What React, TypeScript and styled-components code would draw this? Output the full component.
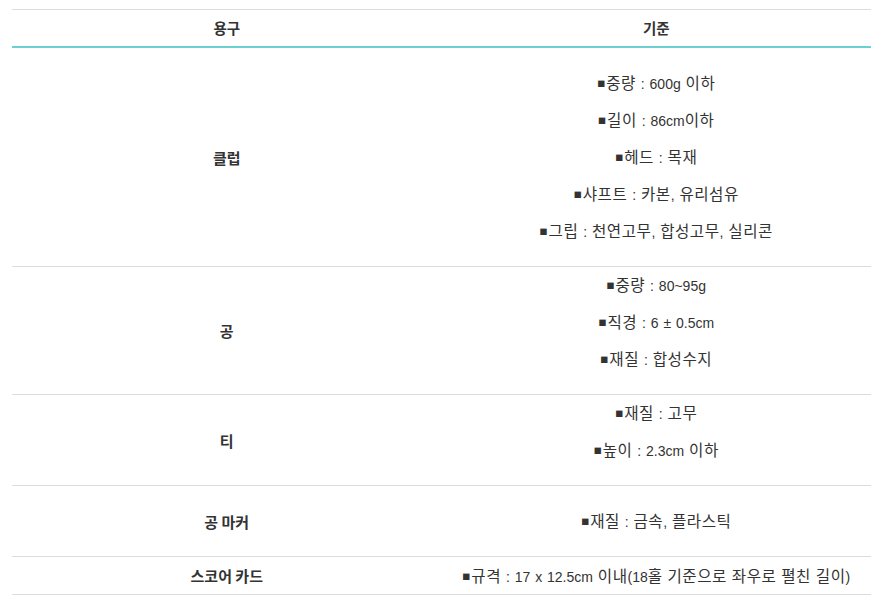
import React from 'react';
import styled, { createGlobalStyle } from 'styled-components';

const GlobalStyle = createGlobalStyle`
  body {
    margin: 0;
    background: #fff;
    font-family: 'Liberation Sans', 'Noto Sans CJK KR', sans-serif;
  }
`;

const Wrapper = styled.div`
  padding: 9px 8px 0 12px;
`;

const Table = styled.table`
  width: 859px;
  border-collapse: collapse;
  border-top: 1px solid #dcdcdc;
  font-size: 14px;
  line-height: 21px;
  color: #333;
  text-align: center;
`;

const HeadCell = styled.th`
  width: 50%;
  padding: 7px 0 8px;
  font-family: 'Noto Sans CJK KR', sans-serif;
  font-size: 14.5px;
  font-weight: 700;
  color: #333;
  border-bottom: 2px solid #6cd0d3;
`;

const Row = styled.tr`
  border-bottom: 1px solid #dcdcdc;
`;

const NameCell = styled.td`
  padding: 8px 0;
  font-family: 'Noto Sans CJK KR', sans-serif;
  font-size: 15px;
  font-weight: 700;
  vertical-align: middle;
`;

const SpecCell = styled.td`
  padding: 8px 0;
  vertical-align: middle;
`;

const Line = styled.p<{ $flushTop?: boolean; $flat?: boolean }>`
  height: ${(p) => (p.$flat ? '19px' : '20px')};
  padding-top: 1px;
  white-space: nowrap;
  word-spacing: 1px;
  margin: ${(p) => (p.$flat ? '0' : p.$flushTop ? '0 0 16px' : '17px 0 16px')};
  &:not(:first-child) {
    margin-top: 0;
  }
`;

const Hangul = styled.span`
  font-family: 'Noto Sans CJK KR', sans-serif;
  font-size: 15.6px;
  letter-spacing: 0.5px;
  line-height: 1;
`;

const Bullet = styled.span`
  font-family: 'Noto Sans CJK KR', sans-serif;
  font-size: 8px;
  line-height: 1;
  vertical-align: 2px;
  margin-right: 1px;
`;

type Item = { name: string; specs: string[]; flushTop?: boolean; flat?: boolean };

const items: Item[] = [
  {
    name: '클럽',
    specs: [
      '중량 : 600g 이하',
      '길이 : 86cm이하',
      '헤드 : 목재',
      '샤프트 : 카본, 유리섬유',
      '그립 : 천연고무, 합성고무, 실리콘',
    ],
  },
  {
    name: '공',
    specs: ['중량 : 80~95g', '직경 : 6 ± 0.5cm', '재질 : 합성수지'],
    flushTop: true,
  },
  { name: '티', specs: ['재질 : 고무', '높이 : 2.3cm 이하'], flushTop: true },
  { name: '공 마커', specs: ['재질 : 금속, 플라스틱'] },
  { name: '스코어 카드', specs: ['규격 : 17 x 12.5cm 이내(18홀 기준으로 좌우로 펼친 길이)'], flat: true },
];

// hangul runs are set a bit larger, like the body font of the original page
function SpecText({ text }: { text: string }) {
  const parts = text.split(/([\uAC00-\uD7A3]+)/);
  return (
    <>
      {parts.map((part, i) =>
        /[\uAC00-\uD7A3]/.test(part) ? <Hangul key={i}>{part}</Hangul> : part,
      )}
    </>
  );
}

function App() {
  return (
    <Wrapper>
      <GlobalStyle />
      <Table>
        <thead>
          <tr>
            <HeadCell>용구</HeadCell>
            <HeadCell>기준</HeadCell>
          </tr>
        </thead>
        <tbody>
          {items.map((item) => (
            <Row key={item.name}>
              <NameCell>{item.name}</NameCell>
              <SpecCell>
                {item.specs.map((s, i) => (
                  <Line key={s} $flushTop={item.flushTop && i === 0} $flat={item.flat}>
                    <Bullet>■</Bullet>
                    <SpecText text={s} />
                  </Line>
                ))}
              </SpecCell>
            </Row>
          ))}
        </tbody>
      </Table>
    </Wrapper>
  );
}

export default App;
